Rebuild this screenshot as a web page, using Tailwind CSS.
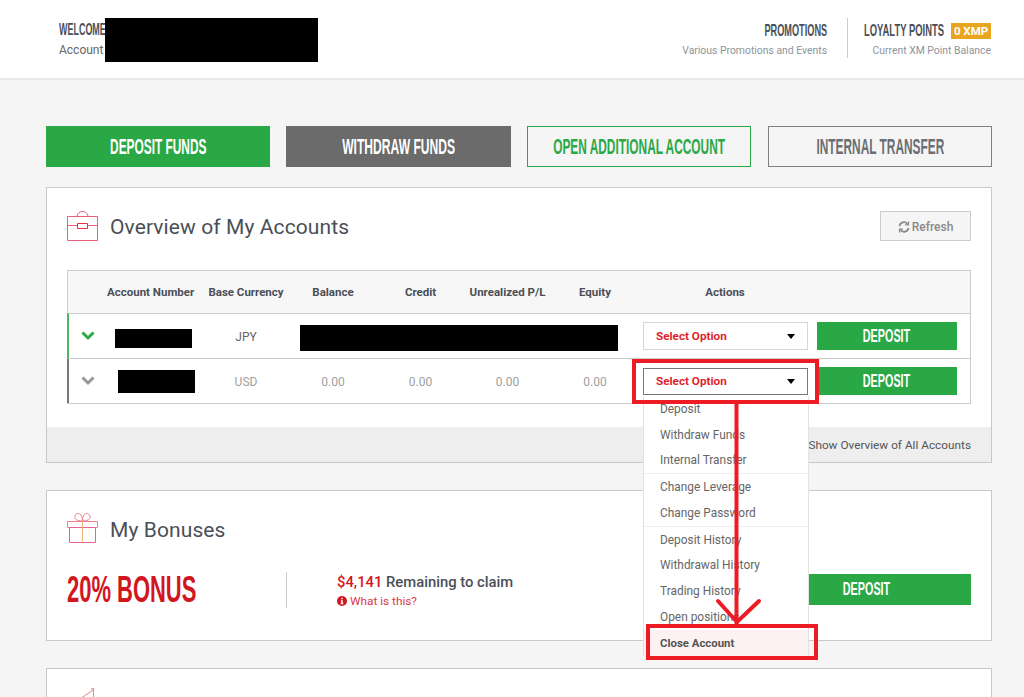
<!DOCTYPE html>
<html lang="en">
  <head>
    <meta charset="UTF-8" />
    <title>Members Area</title>
    <script src="https://cdn.jsdelivr.net/npm/@tailwindcss/browser@4"></script>
  </head>
  <body class="bg-[#f5f5f5]">
    <div class="relative w-[1024px] h-[697px] overflow-hidden font-['Roboto',sans-serif] text-[#4a4f57]">
      <!-- Top bar -->
      <header class="h-[80px] bg-white border-b-2 border-[#e8e8e8] flex justify-between pl-[59px] pr-[33px]">
        <div class="pt-[20px] flex items-start">
          <div class="w-[46px]">
            <div class="h-[20px] leading-[20px] text-[16px] font-bold font-['Liberation_Sans',sans-serif]"><span class="inline-block whitespace-nowrap origin-left scale-x-[.56]">WELCOME</span></div>
            <div class="text-[12px] leading-[14px] mt-[3px] text-[#666] whitespace-nowrap">Account</div>
          </div>
          <div class="relative w-[213px] h-[44px] bg-black -mt-[2px]"></div>
        </div>
        <div class="flex pt-[18px]">
          <div class="text-right pr-[20px] h-[40px] border-r border-[#ccc]">
            <div class="h-[25px] leading-[25px] text-[17px] font-bold font-['Liberation_Sans',sans-serif]"><span class="inline-block whitespace-nowrap origin-right scale-x-[.54]">PROMOTIONS</span></div>
            <div class="text-[10.4px] leading-[14px] mt-[1px] text-[#8d949c]">Various Promotions and Events</div>
          </div>
          <div class="text-right pl-[16px]">
            <div class="h-[25px] flex items-center gap-[7px]">
              <div class="w-[80px] text-left text-[17px] font-bold font-['Liberation_Sans',sans-serif]"><span class="inline-block whitespace-nowrap origin-left scale-x-[.555]">LOYALTY POINTS</span></div>
              <span class="w-[40px] h-[16px] bg-[#e9a51f] text-white text-[11.5px] leading-[16px] font-bold text-center">0 XMP</span>
            </div>
            <div class="text-[10.4px] leading-[14px] mt-[1px] text-[#8d949c]">Current XM Point Balance</div>
          </div>
        </div>
      </header>

      <main class="pl-[46px] pr-[32px] pt-[46px]">
        <!-- Main actions -->
        <div class="grid grid-cols-[224px_225px_224px_225px] gap-[16px] h-[41px] text-[22px] font-bold font-['Liberation_Sans',sans-serif]">
          <a class="flex items-center justify-center bg-[#2ba846] text-white"><span class="whitespace-nowrap scale-x-[.54]">DEPOSIT FUNDS</span></a>
          <a class="flex items-center justify-center bg-[#6b6b6b] text-white"><span class="whitespace-nowrap scale-x-[.55]">WITHDRAW FUNDS</span></a>
          <a class="flex items-center justify-center border border-[#2ba846] text-[#2ba846]"><span class="whitespace-nowrap scale-x-[.54]">OPEN ADDITIONAL ACCOUNT</span></a>
          <a class="flex items-center justify-center ml-[1px] border border-[#808080] text-[#6b6e73]"><span class="whitespace-nowrap scale-x-[.54]">INTERNAL TRANSFER</span></a>
        </div>

        <!-- Overview -->
        <section class="mt-[20px] h-[276px] bg-white border border-[#c8c8c8] flex flex-col">
          <div class="flex items-start justify-between pl-[20px] pr-[20px] pt-[22px] h-[82px]">
            <div class="flex items-center gap-[12px] h-[32px]">
              <svg class="w-[31px] h-[31px]" viewBox="0 0 31 31" fill="none" stroke="#e8607c" stroke-width="1">
                <path d="M.5 5.500h30v24H.5z" />
                <path d="M.5 14.500h10m10 0h10" />
                <path d="M10.500 12.500h10v5h-10z" stroke="#e4303c" />
                <path d="M10 5c1-6 10-6 11 0" />
              </svg>
              <h2 class="text-[21px] tracking-[.1px] mt-[3px]">Overview of My Accounts</h2>
            </div>
            <button class="w-[91px] h-[30px] mt-[1px] pt-[1px] bg-[#f5f5f5] border border-[#ccc] text-[12px] font-medium text-[#8a8a8a] flex items-center justify-center gap-[2px]">
              <svg class="w-[12px] h-[12px]" viewBox="0 0 12 12" fill="none" stroke="#8a8a8a" stroke-width="1.800">
                <path d="M1.500 5A4.500 4.500 0 0 1 9.500 3M10.500 7A4.500 4.500 0 0 1 2.500 9" />
                <path d="M10.500 .5v3.400H7.100M1.500 11.500V8.100h3.400" stroke-width="1.200" />
              </svg>
              Refresh
            </button>
          </div>

          <div class="mx-[20px] border border-[#ccc] border-l-0 text-[12px]">
            <div class="grid grid-cols-[39px_96px_86px_88px_87px_87px_88px_1fr] items-center h-[42px] pt-[2px] bg-[#f7f7f7] border-l border-[#ccc] font-bold text-[#4a4f57] text-[11.5px] text-center">
              <div></div>
              <div class="text-left">Account Number</div>
              <div>Base Currency</div>
              <div>Balance</div>
              <div>Credit</div>
              <div>Unrealized P/L</div>
              <div>Equity</div>
              <div class="pr-[160px] pl-[1px]">Actions</div>
            </div>
            <div class="grid grid-cols-[38px_96px_86px_88px_87px_87px_88px_1fr] items-center h-[45px] border-t border-[#ccc] border-l-2 border-l-[#4bb864] text-center text-[#666]">
              <svg class="w-[14px] h-[10px] ml-[12px]" viewBox="0 0 14 10" fill="none" stroke="#2ba846" stroke-width="3"><path d="M1.500 1.500 7 7l5.500-5.500" /></svg>
              <div><div class="w-[77px] h-[19px] bg-black ml-[8px] mt-[4px]"></div></div>
              <div class="pt-[2px]">JPY</div>
              <div class="col-span-4"><div class="w-[318px] h-[26px] bg-black ml-[11px] mt-[4px]"></div></div>
              <div class="flex items-center pl-[4px] gap-[9px]">
                <div class="w-[165px] h-[28px] pt-[2px] border border-[#d5d5d5] bg-white pl-[12px] pr-[12px] flex items-center justify-between text-[#e01f2d] font-bold text-[11.7px]">
                  Select Option
                  <span class="-mt-[2px] border-x-[4px] border-x-transparent border-t-[5px] border-t-black"></span>
                </div>
                <a class="w-[140px] h-[28px] bg-[#2ba846] text-white flex items-center justify-center text-[18px] font-bold font-['Liberation_Sans',sans-serif]"><span class="whitespace-nowrap scale-x-[.6]">DEPOSIT</span></a>
              </div>
            </div>
            <div class="grid grid-cols-[38px_96px_86px_88px_87px_87px_88px_1fr] items-center h-[45px] border-t border-[#ccc] border-l-2 border-l-[#777] text-center text-[#a0a0a0]">
              <svg class="w-[14px] h-[10px] ml-[12px]" viewBox="0 0 14 10" fill="none" stroke="#999" stroke-width="3"><path d="M1.500 1.500 7 7l5.500-5.500" /></svg>
              <div><div class="w-[77px] h-[23px] bg-black ml-[11px]"></div></div>
              <div class="pt-[2px]">USD</div>
              <div class="pt-[2px]">0.00</div>
              <div class="pt-[2px]">0.00</div>
              <div class="pt-[2px]">0.00</div>
              <div class="pt-[2px]">0.00</div>
              <div class="flex items-center pl-[4px] gap-[9px]">
                <div class="w-[165px] h-[27px] pt-[2px] border border-[#777] bg-white pl-[12px] pr-[12px] flex items-center justify-between text-[#e01f2d] font-bold text-[11.7px]">
                  Select Option
                  <span class="-mt-[2px] border-x-[4px] border-x-transparent border-t-[5px] border-t-black"></span>
                </div>
                <a class="w-[140px] h-[28px] bg-[#2ba846] text-white flex items-center justify-center text-[18px] font-bold font-['Liberation_Sans',sans-serif]"><span class="whitespace-nowrap scale-x-[.6]">DEPOSIT</span></a>
              </div>
            </div>
          </div>

          <div class="mt-auto h-[35px] pt-[2px] bg-[#eeeeee] flex items-center justify-end pr-[20px] text-[11.8px] text-[#555]">Show Overview of All Accounts</div>
        </section>

        <!-- Bonuses -->
        <section class="mt-[27px] h-[151px] bg-white border border-[#c8c8c8] px-[20px] pt-[22px]">
          <div class="flex items-center gap-[12px] h-[32px]">
            <svg class="w-[31px] h-[32px] -mt-[2px]" viewBox="0 0 31 32" fill="none" stroke="#ef7f8a" stroke-width="1">
              <path d="M.5 9.500h30v6H.5z" />
              <path d="M2.500 15.500h26v15h-26z" stroke="#e85f9a" />
              <path d="M15.500 9.500v21" stroke="#f2b27a" />
              <path d="M15.500 9c-7 0-9-3-7-6s7-2 7 6c0-8 5-9 7-6s0 6-7 6z" />
            </svg>
            <h2 class="text-[21px] tracking-[.1px] mt-[4px]">My Bonuses</h2>
          </div>
          <div class="flex items-center mt-[27px] h-[36px]">
            <div class="w-[220px] h-[36px] border-r border-[#ccc] text-[#d2161e] text-[36px] leading-[36px] font-bold font-['Liberation_Sans',sans-serif]"><span class="inline-block whitespace-nowrap origin-left scale-x-[.61]">20% BONUS</span></div>
            <div class="pl-[50px]">
              <div class="text-[14.8px] leading-[18px] font-medium"><span class="text-[#d2161e]">$4,141</span> Remaining to claim</div>
              <div class="mt-[3px] text-[11.8px] leading-[14px] text-[#e0354a] flex items-center gap-[3px]">
                <svg class="w-[10px] h-[10px]" viewBox="0 0 10 10"><circle cx="5" cy="5" r="5" fill="#d2161e" /><path d="M4.200 1.800h1.600v1.400H4.200zM3.800 4.200h2v3.100h.6v1H3.600v-1h.6V5.200h-.4z" fill="#fff" /></svg>
                What is this?
              </div>
            </div>
            <a class="ml-auto -mt-[2px] w-[209px] h-[31px] bg-[#2ba846] text-white flex items-center justify-center text-[18px] font-bold font-['Liberation_Sans',sans-serif]"><span class="whitespace-nowrap scale-x-[.6]">DEPOSIT</span></a>
          </div>
        </section>

        <!-- Next panel, cut off by the window -->
        <section class="mt-[27px] h-[120px] bg-white border border-[#c8c8c8] pl-[30px] pt-[19px]">
          <svg class="w-[18px] h-[12px]" viewBox="0 0 18 12" fill="none" stroke="#ef7f8a" stroke-width="1"><path d="M1 12 15 3V0h1.500v12" /></svg>
        </section>
      </main>

      <!-- Open dropdown -->
      <ul class="absolute left-[643px] top-[396px] w-[166px] h-[260px] bg-white border-x border-b border-[#e2e2e2] text-[11.9px] text-[#666]">
        <li class="h-[26px] leading-[26px] pl-[16px]">Deposit</li>
        <li class="h-[26px] leading-[26px] pl-[16px]">Withdraw Funds</li>
        <li class="h-[25px] leading-[25px] pl-[16px]">Internal Transfer</li>
        <li class="h-[27px] leading-[27px] pl-[16px] border-t border-[#eee]">Change Leverage</li>
        <li class="h-[26px] leading-[26px] pl-[16px]">Change Password</li>
        <li class="h-[26px] leading-[26px] pl-[16px] border-t border-[#eee]">Deposit History</li>
        <li class="h-[26px] leading-[26px] pl-[16px]">Withdrawal History</li>
        <li class="h-[26px] leading-[26px] pl-[16px]">Trading History</li>
        <li class="h-[26px] leading-[26px] pl-[16px]">Open positions</li>
        <li class="h-[26px] leading-[26px] pl-[16px] bg-[#fdf1f2] font-bold text-[11.4px] text-[#555]">Close Account</li>
      </ul>

      <!-- Red annotations drawn on the screenshot -->
      <div class="absolute left-[632px] top-[359px] w-[187px] h-[45px] border-4 border-[#ed1c24]"></div>
      <div class="absolute left-[646px] top-[624px] w-[172px] h-[36px] border-4 border-[#ed1c24]"></div>
      <svg class="absolute left-[710px] top-[400px] w-[56px] h-[230px]" viewBox="0 0 56 230" fill="none" stroke="#ed1c24">
        <path d="M26.500 4v220" stroke-width="4" />
        <path d="M8 201l19 21 22-21" stroke-width="4" stroke-linecap="round" />
      </svg>
    </div>
  </body>
</html>
